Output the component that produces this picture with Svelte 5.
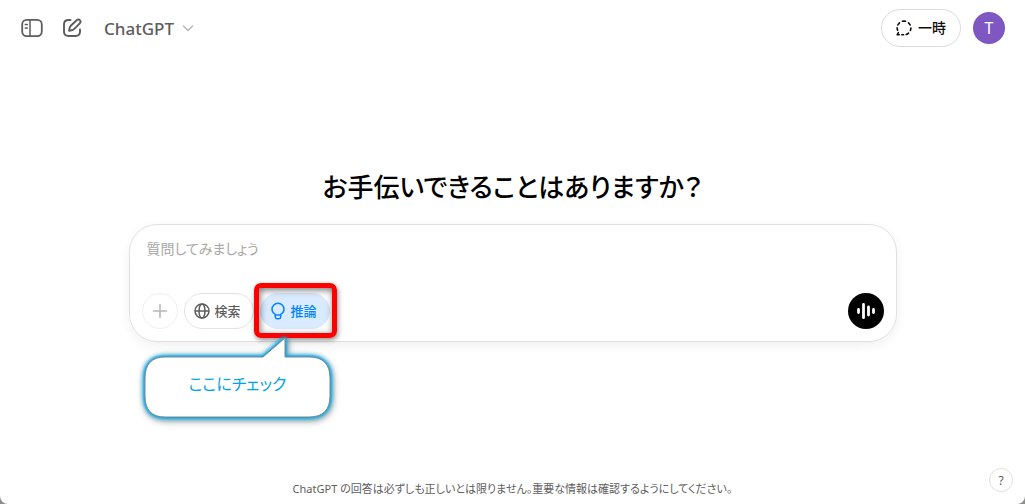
<script lang="ts">
	let prompt = $state('');
	let searchOn = $state(false);
	let reasonOn = $state(true);
</script>

<div class="page">
	<header class="topbar">
		<button class="icon-btn" aria-label="サイドバーを開く">
			<svg width="24" height="24" viewBox="0 0 24 24" fill="none" stroke="currentColor" stroke-width="1.8">
				<rect x="2.2" y="3.9" width="19.6" height="16.2" rx="4.5" />
				<path d="M10 4v16" stroke-width="1.5" />
				<path d="M5.4 8.500h1.800M5.4 12h1.800" stroke-width="1.700" stroke-linecap="round" />
			</svg>
		</button>
		<button class="icon-btn" aria-label="新しいチャット">
			<svg width="24" height="24" viewBox="0 0 24 24" fill="none" stroke="currentColor" stroke-width="1.9" stroke-linecap="round" stroke-linejoin="round">
				<path d="M10.500 4H8.500C5.200 4 4 5.200 4 8.500v7C4 18.800 5.200 20 8.500 20h7c3.300 0 4.500-1.200 4.500-4.500V13.500" />
				<path d="M16.700 4.200a2.170 2.170 0 0 1 3.100 3.100l-5.500 5.500a5 5 0 0 1-2.600 1.400l-2.600.5.5-2.600a5 5 0 0 1 1.400-2.600z" />
			</svg>
		</button>
		<button class="model">
			ChatGPT
			<svg width="16" height="16" viewBox="0 0 16 16" fill="none" stroke="#b4b4b4" stroke-width="1.4" stroke-linecap="round" stroke-linejoin="round">
				<path d="M3.500 6 8 10.500 12.500 6" />
			</svg>
		</button>
		<div class="account">
			<button class="temporary">
				<svg width="18" height="18" viewBox="0 0 18 18" fill="none" stroke="currentColor" stroke-width="1.6" stroke-linecap="round">
					<path d="M7.500 2.300a7 7 0 0 1 3 0M13.500 3.800a7 7 0 0 1 1.700 2.200M15.900 9a7 7 0 0 1-.5 2.500M13.500 14.100a7 7 0 0 1-2.300 1.400M8.500 15.800h-1.700M4.500 3.800a7 7 0 0 0-1.700 2.200M2.100 8.800a7 7 0 0 0 .5 2.400" />
					<path d="M3.400 13.700 2.200 15.700h2" stroke-linejoin="round" />
				</svg>
				一時
			</button>
			<button class="avatar" aria-label="プロフィール">T</button>
		</div>
	</header>

	<main>
		<h1>お手伝いできることはありますか？</h1>
		<form class="composer" onsubmit={(e) => e.preventDefault()}>
			<textarea rows="1" aria-label="メッセージ" placeholder="質問してみましょう" bind:value={prompt}></textarea>
			<div class="tools">
				<button type="button" class="round add" aria-label="ファイルを追加">
					<svg width="18" height="18" viewBox="0 0 18 18" stroke="currentColor" stroke-width="1.5" stroke-linecap="round">
						<path d="M9 2.500v13M2.500 9h13" />
					</svg>
				</button>
				<button type="button" class="pill" class:on={searchOn} aria-pressed={searchOn} onclick={() => (searchOn = !searchOn)}>
					<svg width="18" height="18" viewBox="0 0 18 18" fill="none" stroke="currentColor" stroke-width="1.5">
						<circle cx="9" cy="9" r="7" />
						<ellipse cx="9" cy="9" rx="3" ry="7" />
						<path d="M2 9h14" />
					</svg>
					検索
				</button>
				<div class="marked">
					<button type="button" class="pill" class:on={reasonOn} aria-pressed={reasonOn} onclick={() => (reasonOn = !reasonOn)}>
						<svg width="18" height="18" viewBox="0 0 18 18" fill="none" stroke="currentColor" stroke-width="1.5" stroke-linejoin="round">
							<path d="M6.300 13v-.700C4.300 11.200 3 9.400 3 7.300a6 6 0 0 1 12 0c0 2.100-1.300 3.900-3.300 5V13z" />
							<path d="M6.300 13v2c0 1 .8 1.700 1.700 1.700h2c.9 0 1.700-.7 1.700-1.700v-2" />
						</svg>
						推論
					</button>
					<span class="frame"></span>
					<div class="callout">
						<svg width="188" height="82" viewBox="0 0 188 82">
							<path d="M21 20H119L141 1V20H165Q186 20 186 41V59Q186 80 165 80H21Q1 80 1 59V41Q1 20 21 20Z" fill="#fff" stroke="#7d868a" stroke-width="1" />
						</svg>
						<span>ここにチェック</span>
					</div>
				</div>
				<button type="button" class="round voice" aria-label="音声モード">
					<svg width="20" height="20" viewBox="0 0 20 20" stroke="currentColor" stroke-width="2.800" stroke-linecap="round">
						<path d="M2.500 8.500v3M7.500 3.300v13.400M12.500 6v8M17.500 8.500v3" />
					</svg>
				</button>
			</div>
		</form>
	</main>

	<footer>
		<p>ChatGPT の回答は必ずしも正しいとは限りません。重要な情報は確認するようにしてください。</p>
		<button class="help" aria-label="ヘルプ">?</button>
	</footer>
</div>

<style>
	:global(body) {
		margin: 0;
		background: #8b8f86;
	}
	.page {
		min-height: 100vh;
		display: flex;
		flex-direction: column;
		background: #fff;
		border-radius: 0 0 8px 8px;
		color: #000;
		font-family: 'Noto Sans', 'Noto Sans CJK JP', sans-serif;
		font-feature-settings: 'palt';
	}
	button {
		display: flex;
		align-items: center;
		justify-content: center;
		box-sizing: border-box;
		margin: 0;
		padding: 0;
		border: 0;
		background: none;
		color: inherit;
		font: inherit;
		font-feature-settings: inherit;
		cursor: pointer;
	}
	svg {
		flex: none;
	}
	.topbar {
		display: flex;
		align-items: center;
		height: 56px;
		padding: 0 20px 0 12px;
		color: #5d5d5d;
	}
	.icon-btn {
		width: 40px;
		height: 40px;
	}
	.model {
		gap: 6px;
		margin-left: 12px;
		font-size: 17px;
		font-weight: 500;
	}
	.account {
		display: flex;
		align-items: center;
		gap: 12px;
		margin-left: auto;
	}
	.temporary {
		gap: 5px;
		height: 38px;
		padding: 0 14px 0 13px;
		border: 1px solid #dcdcdc;
		border-radius: 19px;
		color: #0d0d0d;
		font-size: 14px;
		line-height: 20px;
		font-weight: 500;
	}
	.avatar {
		width: 32px;
		height: 32px;
		border-radius: 50%;
		background: #7e57c2;
		color: #fff;
		font-size: 16px;
	}
	main {
		flex: 1;
		display: flex;
		flex-direction: column;
		align-items: center;
		justify-content: center;
		gap: 20px;
		padding: 0 24px 18px;
	}
	h1 {
		margin: 0;
		font-size: 26px;
		line-height: 34px;
		font-weight: 500;
	}
	.composer {
		box-sizing: border-box;
		width: 100%;
		max-width: 768px;
		padding: 12px;
		border: 1px solid #e0e0e0;
		border-radius: 28px;
		box-shadow: 0 4px 12px rgba(0, 0, 0, 0.06);
	}
	textarea {
		display: block;
		box-sizing: border-box;
		width: 100%;
		height: 44px;
		margin: 0 0 12px;
		padding: 0 5px;
		border: 0;
		outline: 0;
		resize: none;
		overflow: hidden;
		background: none;
		font: 14px/22px 'Noto Sans CJK JP', sans-serif;
		font-feature-settings: inherit;
	}
	textarea::placeholder {
		color: #a8a8a8;
		opacity: 1;
	}
	.tools {
		display: flex;
		align-items: center;
		gap: 6px;
	}
	.round {
		width: 36px;
		height: 36px;
		border-radius: 50%;
	}
	.add {
		border: 1px solid #eee;
		color: #b4b4b4;
	}
	.voice {
		margin-left: auto;
		background: #000;
		color: #fff;
	}
	.pill {
		gap: 4px;
		height: 36px;
		padding: 0 12px 0 8px;
		border: 1px solid #e3e3e3;
		border-radius: 18px;
		color: #5d5d5d;
		font-family: 'Noto Sans CJK JP', sans-serif;
		font-size: 13px;
		line-height: 18px;
		font-weight: 500;
	}
	.pill.on {
		border-color: #daebff;
		background: #daebff;
		color: #0285ff;
	}
	.marked {
		position: relative;
	}
	.frame {
		position: absolute;
		inset: -10px -7px -9px -6px;
		border: 5px solid #fe0000;
		border-radius: 7px;
		box-shadow:
			1px 2px 5px rgba(0, 0, 0, 0.45),
			inset 1px 2px 7px rgba(0, 0, 0, 0.55);
		pointer-events: none;
	}
	.callout {
		position: absolute;
		top: 44px;
		left: -116px;
		width: 188px;
		color: #00a2e8;
		font-size: 16px;
		pointer-events: none;
	}
	.callout svg {
		display: block;
		overflow: visible;
		filter: drop-shadow(0 0 1px #10aeea) drop-shadow(0 0 1px #10aeea) drop-shadow(0 0 2px #10aeea) drop-shadow(1px 2px 3px rgba(0, 0, 0, 0.35));
	}
	.callout span {
		position: absolute;
		inset: 34px 0 auto;
		line-height: 26px;
		text-align: center;
	}
	footer {
		display: flex;
		align-items: center;
		height: 30px;
		padding: 0 12px;
		color: #5d5d5d;
		font-size: 11px;
	}
	footer p {
		flex: 1;
		margin: 0 0 0 24px;
		line-height: 16px;
		text-align: center;
	}
	.help {
		width: 24px;
		height: 24px;
		margin-bottom: 18px;
		border: 1px solid #e0e0e0;
		border-radius: 50%;
		font-size: 12px;
	}
</style>
